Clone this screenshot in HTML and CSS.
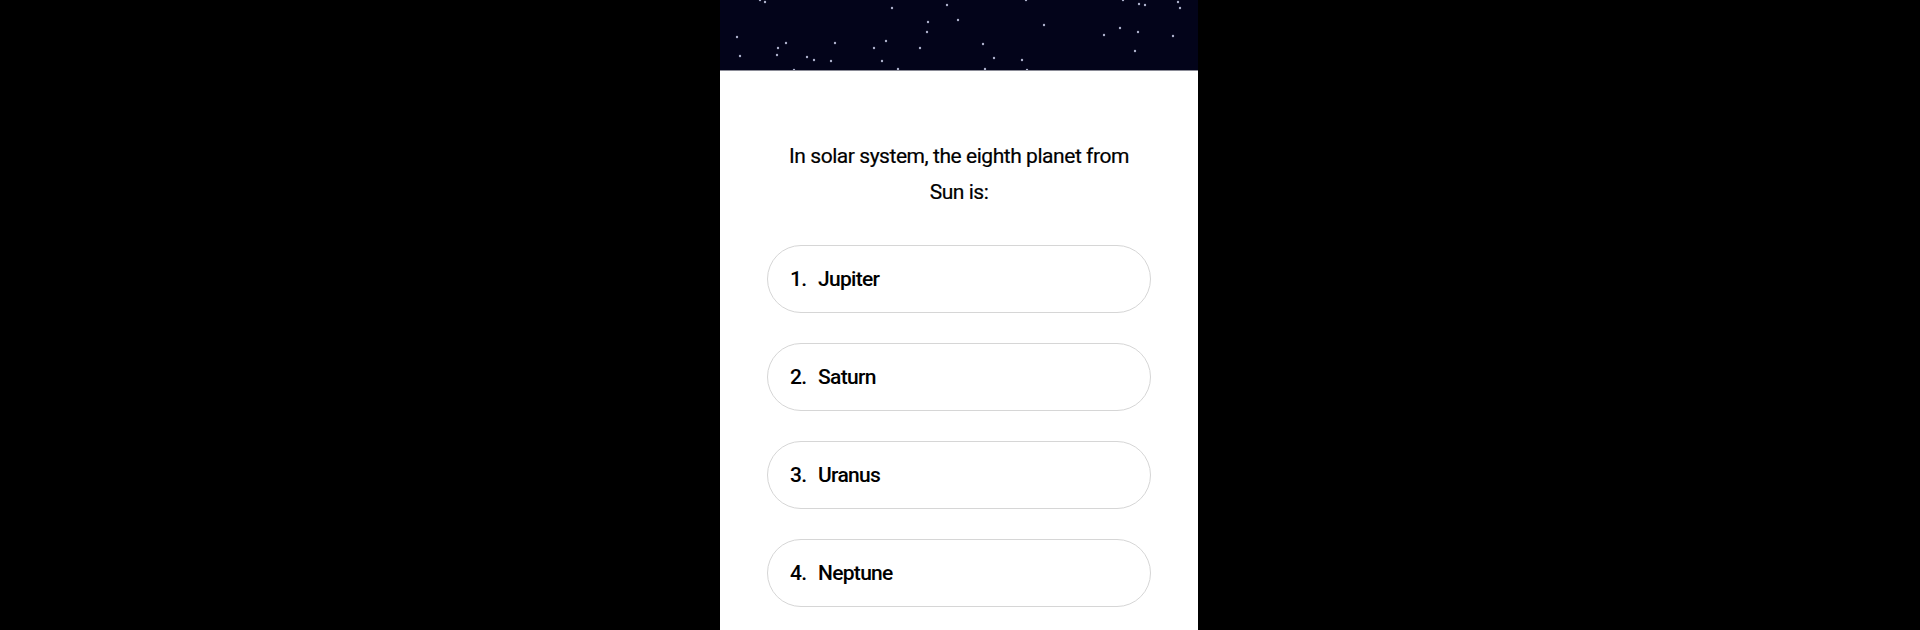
FILE: index.html
```html
<!DOCTYPE html>
<html lang="en">
<head>
<meta charset="utf-8">
<title>Quiz</title>
<link rel="stylesheet" href="styles.css">
</head>
<body>
<main class="panel">
  <header class="sky">
    <svg class="stars" width="478" height="71" viewBox="0 0 478 71" aria-hidden="true">
      <g fill="#aeb2cc">
        <circle cx="40" cy="0" r="1.2"/><circle cx="45" cy="2" r="1.2"/>
        <circle cx="172" cy="8" r="1.2"/><circle cx="227" cy="5" r="1.2"/>
        <circle cx="238" cy="20" r="1.2"/><circle cx="208" cy="22" r="1.2"/>
        <circle cx="207" cy="32" r="1.2"/><circle cx="17" cy="37" r="1.2"/>
        <circle cx="66" cy="43" r="1.2"/><circle cx="58" cy="48" r="1.2"/>
        <circle cx="115" cy="43" r="1.2"/><circle cx="166" cy="41" r="1.2"/>
        <circle cx="154" cy="48" r="1.2"/><circle cx="200" cy="48" r="1.2"/>
        <circle cx="20" cy="56" r="1.2"/><circle cx="57" cy="55" r="1.2"/>
        <circle cx="87" cy="57" r="1.2"/><circle cx="94" cy="60" r="1.2"/>
        <circle cx="111" cy="61" r="1.2"/><circle cx="162" cy="61" r="1.2"/>
        <circle cx="178" cy="69" r="1.2"/><circle cx="74" cy="70" r="1.2"/>
        <circle cx="306" cy="0" r="1.2"/><circle cx="324" cy="25" r="1.2"/>
        <circle cx="403" cy="0" r="1.2"/><circle cx="419" cy="4" r="1.2"/>
        <circle cx="425" cy="5" r="1.2"/><circle cx="458" cy="2" r="1.2"/>
        <circle cx="460" cy="8" r="1.2"/><circle cx="400" cy="28" r="1.2"/>
        <circle cx="384" cy="35" r="1.2"/><circle cx="418" cy="32" r="1.2"/>
        <circle cx="453" cy="36" r="1.2"/><circle cx="263" cy="44" r="1.2"/>
        <circle cx="415" cy="51" r="1.2"/><circle cx="274" cy="58" r="1.2"/>
        <circle cx="302" cy="60" r="1.2"/><circle cx="265" cy="69" r="1.2"/>
        <circle cx="307" cy="70" r="1.2"/>
      </g>
    </svg>
  </header>
  <section class="quiz">
    <h1 class="question">In solar system, the eighth planet from Sun is:</h1>
    <ol class="options">
      <li class="option"><span class="num">1.</span><span class="label">Jupiter</span></li>
      <li class="option"><span class="num">2.</span><span class="label">Saturn</span></li>
      <li class="option"><span class="num">3.</span><span class="label">Uranus</span></li>
      <li class="option"><span class="num">4.</span><span class="label">Neptune</span></li>
    </ol>
  </section>
</main>
</body>
</html>
```

FILE: styles.css
```css
* { box-sizing: border-box; }
html, body { margin: 0; padding: 0; }
body {
  background: #000;
  height: 630px;
  overflow: hidden;
  display: flex;
  justify-content: center;
  padding-right: 2px;
  font-family: Roboto, "Liberation Sans", sans-serif;
}
.panel {
  width: 478px;
  height: 630px;
  background: #fff;
  display: flex;
  flex-direction: column;
}
.sky {
  height: 71px;
  background: #03041a;
  border-bottom: 1px solid #8a8b96;
  overflow: hidden;
}
.stars { display: block; }
.quiz {
  padding: 67px 47px 0;
}
.question {
  margin: 0 auto;
  width: 360px;
  text-align: center;
  font-size: 21px;
  font-weight: 400;
  line-height: 36px;
  color: #000;
  letter-spacing: -0.45px;
  -webkit-text-stroke: 0.2px #000;
}
.options {
  list-style: none;
  margin: 35px 0 0;
  padding: 0;
  display: flex;
  flex-direction: column;
  gap: 30px;
}
.option {
  height: 68px;
  border: 1px solid #d6d6d6;
  border-radius: 34px;
  display: flex;
  align-items: center;
  padding-left: 22px;
  font-size: 21px;
  font-weight: 500;
  color: #000;
  letter-spacing: -0.7px;
}
.num { width: 28px; }
```
